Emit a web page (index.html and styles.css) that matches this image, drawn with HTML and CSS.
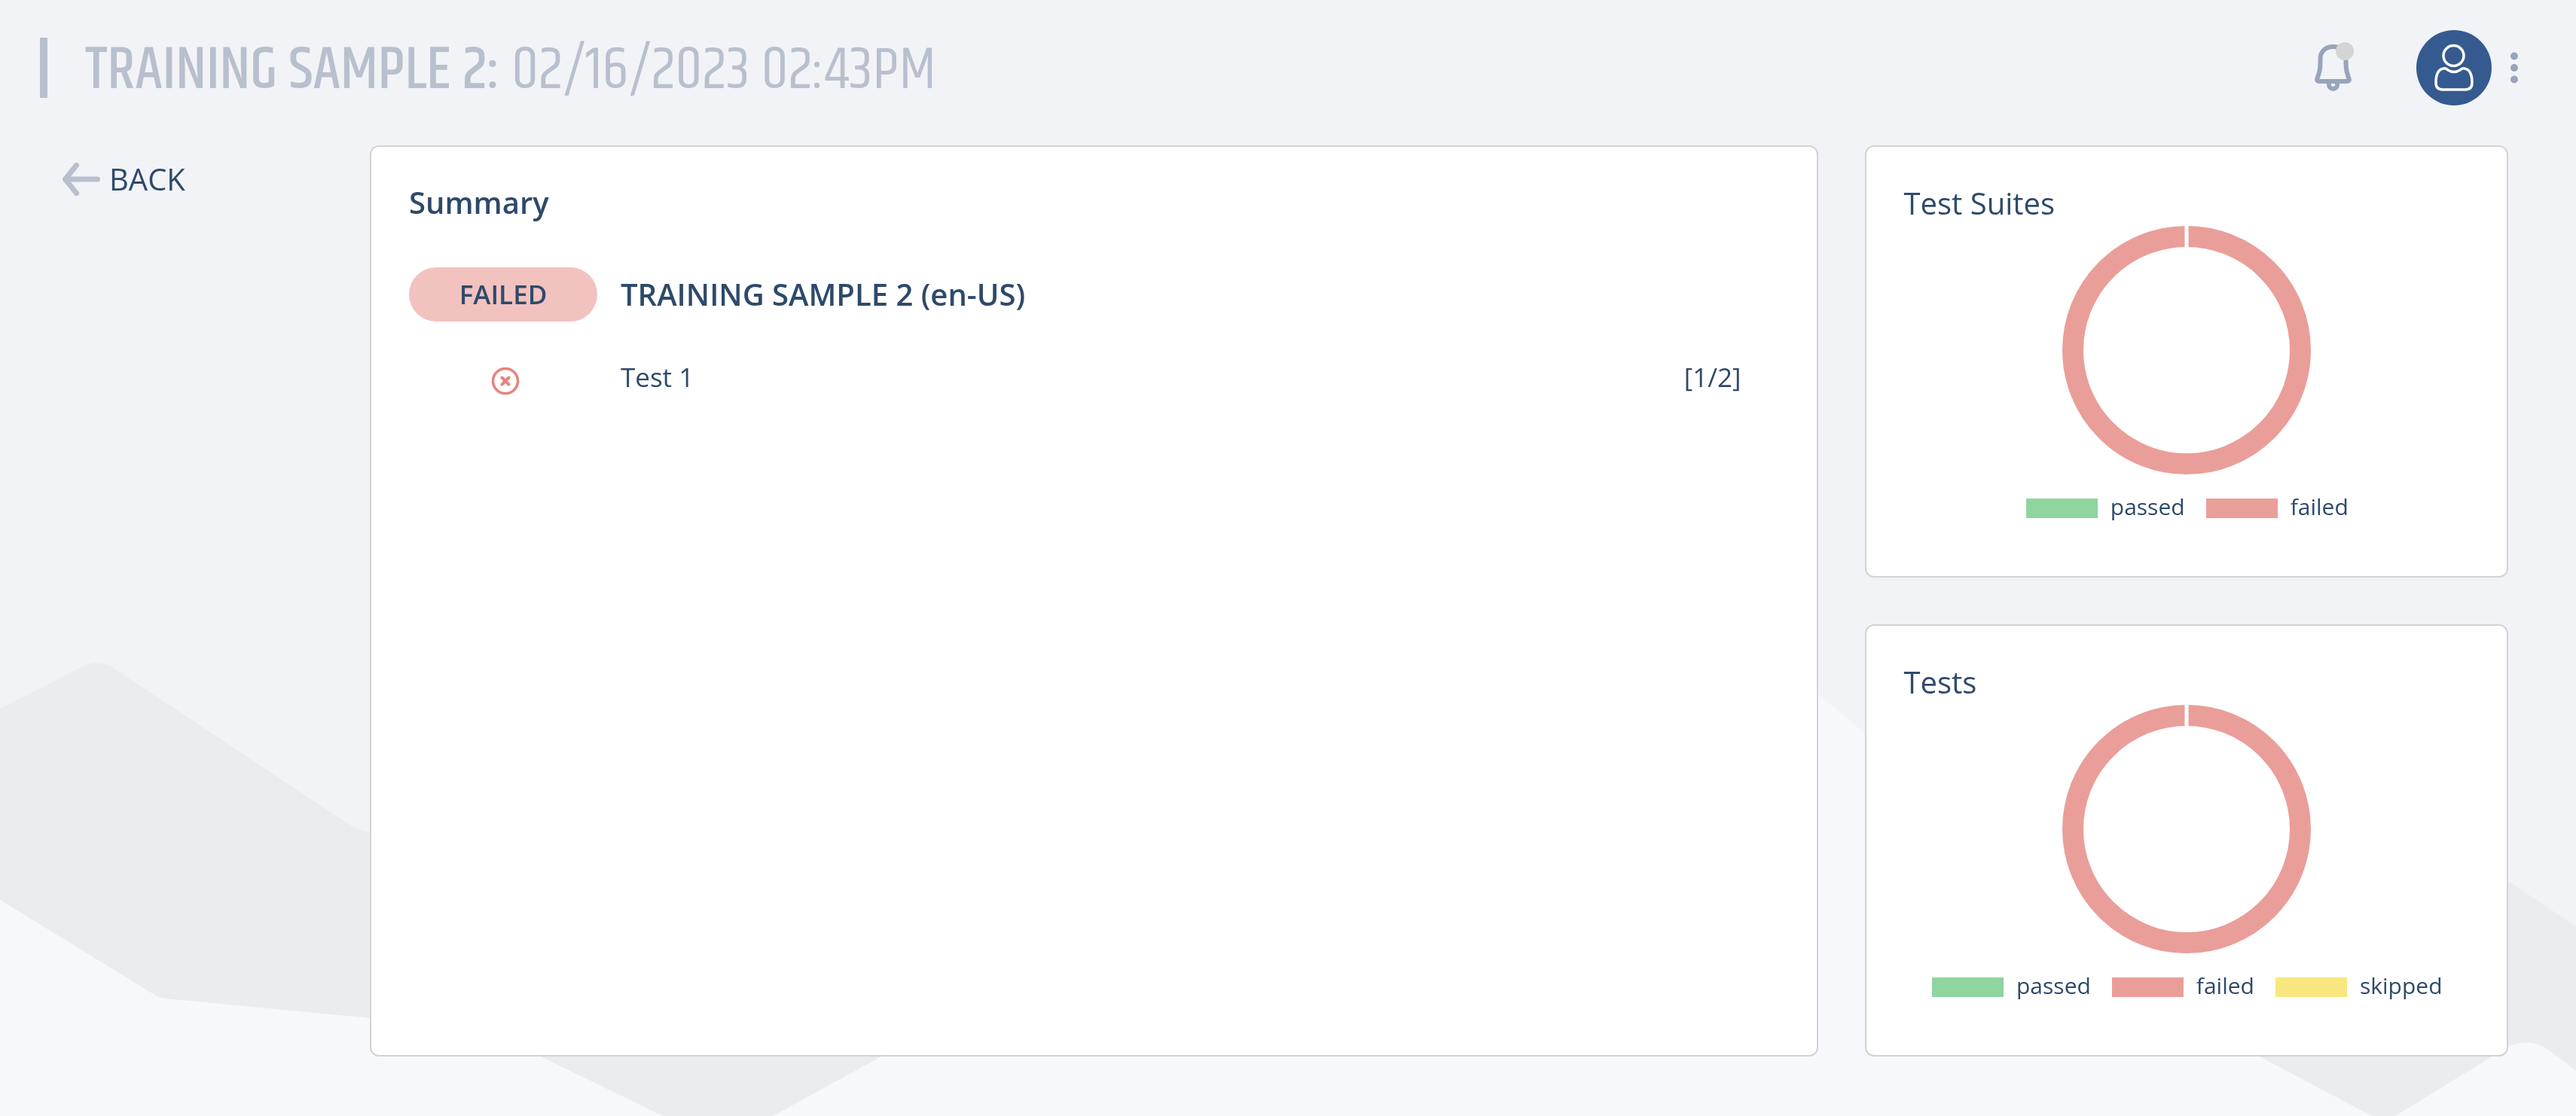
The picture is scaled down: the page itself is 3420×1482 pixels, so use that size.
FILE: index.html
```html
<!DOCTYPE html>
<html lang="en">
<head>
<meta charset="utf-8">
<meta name="viewport" content="width=device-width, initial-scale=1">
<title>Training Sample 2</title>
<link rel="stylesheet" href="styles.css">
</head>
<body>
<svg class="backdrop" viewBox="0 0 3420 1482" preserveAspectRatio="none" aria-hidden="true">
  <path class="shade" d="M0 941L108 886Q128 875 149 886L468 1098Q477 1103 491 1105L1300 1200V1482H0Z"/>
  <path class="light" d="M0 1195L205 1321Q210 1325 220 1326L491 1352L716 1402L880 1482H0Z"/>
  <path class="light" d="M1026 1482L1172 1402L2260 800L2414 922L2476 974L2998 1402L3149 1482Z"/>
  <path class="shade" d="M3149 1482L2998 1402L2700 1150L3000 950L3330 1170L3420 1230V1482Z"/>
  <path class="light" d="M3180 1482L3310 1402L3330 1390Q3355 1378 3379 1391L3420 1422V1482Z"/>
</svg>

<header class="topbar">
  <h1 class="page-title"><span class="page-name">TRAINING SAMPLE 2:</span> 02/16/2023 02:43PM</h1>
  <div class="tools">
    <button class="bell" type="button" aria-label="Notifications">
      <svg width="56" height="68" viewBox="0 0 56 68">
        <g fill="none" stroke="#99a3bb" stroke-width="6" stroke-linejoin="round">
          <path d="M27.500 6C17 6 10.500 13 10.500 22V28C10.500 38 9 42 6.500 48Q5 52 9 52H46Q50 52 48.500 48C46 42 44.500 38 44.500 28V22C44.500 13 38 6 27.500 6Z"/>
          <path d="M22 53V56.500A5.500 5.500 0 0 0 33 56.500V53"/>
        </g>
        <circle cx="43" cy="12" r="12" fill="#d4d4d4"/>
      </svg>
    </button>
    <button class="avatar" type="button" aria-label="Account">
      <svg width="100" height="100" viewBox="0 0 100 100" fill="none" stroke="#fff" stroke-width="3.500">
        <circle cx="49.500" cy="34" r="13.500"/>
        <path d="M36 51C29 52 26 60 26 70Q26 79 35 79H65Q74 79 74 70C74 60 71 52 64 51Q61 50 58 53Q50 58 42 53Q39 50 36 51Z"/>
      </svg>
    </button>
    <button type="button" aria-label="More options">
      <svg width="10" height="42" viewBox="0 0 10 42" fill="#99a3bb">
        <circle cx="5" cy="5.500" r="5"/><circle cx="5" cy="21" r="5"/><circle cx="5" cy="36.500" r="5"/>
      </svg>
    </button>
  </div>
</header>

<div class="layout">
  <nav>
    <a class="back" href="#">
      <svg width="50" height="44" viewBox="0 0 50 44" fill="none" stroke="#b8c0cd" stroke-width="7" stroke-linecap="round" stroke-linejoin="round">
        <path d="M18.500 3.500L3.500 22L18.500 40.500M5 22H46.500"/>
      </svg>
      BACK
    </a>
  </nav>

  <main class="card">
    <h2 class="card-title strong">Summary</h2>
    <section class="suite">
      <span class="status">FAILED</span>
      <h3 class="suite-name">TRAINING SAMPLE 2 (en-US)</h3>
    </section>
    <ul>
      <li class="test">
        <svg class="test-icon" width="38" height="38" viewBox="0 0 38 38" fill="none" stroke="#e6847e" role="img" aria-label="Failed">
          <circle cx="19" cy="19" r="16.500" stroke-width="3.500"/>
          <path d="M14.500 14.500L23.500 23.500M23.500 14.500L14.500 23.500" stroke-width="4" stroke-linecap="round"/>
        </svg>
        <span>Test 1</span>
        <span>[1/2]</span>
      </li>
    </ul>
  </main>

  <aside class="charts">
    <section class="card chart">
      <h2 class="card-title">Test Suites</h2>
      <svg class="donut" width="330" height="330" viewBox="0 0 330 330" role="img" aria-label="All test suites failed">
        <circle cx="165" cy="165" r="151" fill="none" stroke="#ea9e99" stroke-width="28"/>
        <path d="M165 0V30" stroke="#fff" stroke-width="5"/>
      </svg>
      <ul class="legend">
        <li class="passed">passed</li>
        <li class="failed">failed</li>
      </ul>
    </section>
    <section class="card chart">
      <h2 class="card-title">Tests</h2>
      <svg class="donut" width="330" height="330" viewBox="0 0 330 330" role="img" aria-label="All tests failed">
        <circle cx="165" cy="165" r="151" fill="none" stroke="#ea9e99" stroke-width="28"/>
        <path d="M165 0V30" stroke="#fff" stroke-width="5"/>
      </svg>
      <ul class="legend">
        <li class="passed">passed</li>
        <li class="failed">failed</li>
        <li class="skipped">skipped</li>
      </ul>
    </section>
  </aside>
</div>
</body>
</html>
```
FILE: styles.css
```css
* {
  box-sizing: border-box;
}

body {
  margin: 0;
  min-height: 100vh;
  background: #f1f3f7;
  color: #2e4a6a;
  font-family: "Open Sans", sans-serif;
  font-size: 35px;
}

h1, h2, h3, ul {
  margin: 0;
  padding: 0;
  font-weight: 400;
  list-style: none;
}

button {
  padding: 0;
  border: 0;
  background: none;
  cursor: pointer;
}

svg {
  display: block;
}

.backdrop {
  position: fixed;
  inset: 0;
  z-index: -1;
  width: 100%;
  height: 100%;
}

.shade {
  fill: #ebecf0;
}

.light {
  fill: #f7f8fc;
}

/* Header */
.topbar {
  display: flex;
  align-items: center;
  justify-content: space-between;
  padding: 40px 77px 40px 53px;
}

.page-title {
  padding: 8px 0 0 50px;
  border-left: 10px solid #b8c0ce;
  color: #b8c0ce;
  font-family: "Khand", "Roboto Condensed", sans-serif;
  font-size: 80px;
  line-height: 72px;
}

.page-name {
  font-weight: 500;
}

.tools {
  display: flex;
  align-items: center;
}

.bell {
  margin-right: 82px;
}

.avatar {
  margin-right: 25px;
  border-radius: 50%;
  background: #355a8f;
}

/* Page columns */
.layout {
  display: grid;
  grid-template-columns: 346px minmax(0, 9fr) minmax(0, 4fr);
  column-gap: 62px;
  padding: 13px 90px 79px 83px;
}

.back {
  display: inline-flex;
  align-items: center;
  gap: 12px;
  margin-top: 17px;
  color: inherit;
  font-size: 40px;
  line-height: 56px;
  text-decoration: none;
}

.card {
  padding: 44px 50px;
  border: 2px solid #d3d3d3;
  border-radius: 12px;
  background: #fff;
}

.card-title {
  font-size: 40px;
  line-height: 60px;
}

.strong {
  font-weight: 600;
}

/* Summary */
.suite {
  display: flex;
  align-items: center;
  gap: 31px;
  margin-top: 56px;
}

.status {
  width: 250px;
  border-radius: 36px;
  background: #f2c2bf;
  font-weight: 600;
  line-height: 72px;
  text-align: center;
}

.suite-name {
  font-size: 40px;
  font-weight: 600;
  line-height: 54px;
}

.test {
  display: grid;
  grid-template-columns: 256px 1fr auto;
  align-items: end;
  column-gap: 25px;
  margin-top: 50px;
  padding-right: 50px;
  line-height: 48px;
}

.test-icon {
  justify-self: center;
}

/* Charts */
.charts {
  display: grid;
  gap: 62px;
}

.chart {
  padding-top: 45px;
}

.donut {
  margin: 0 auto 28px;
}

.legend {
  display: flex;
  justify-content: center;
  gap: 28px;
  padding: 0 0 33px 2px;
  font-size: 30px;
  line-height: 30px;
}

.legend li {
  display: flex;
  align-items: flex-end;
  gap: 17px;
}

.legend li::before {
  width: 95px;
  height: 26px;
  content: "";
}

.passed::before {
  background: #8ed5a0;
}

.failed::before {
  background: #ea9e99;
}

.skipped::before {
  background: #f8e67f;
}
```
